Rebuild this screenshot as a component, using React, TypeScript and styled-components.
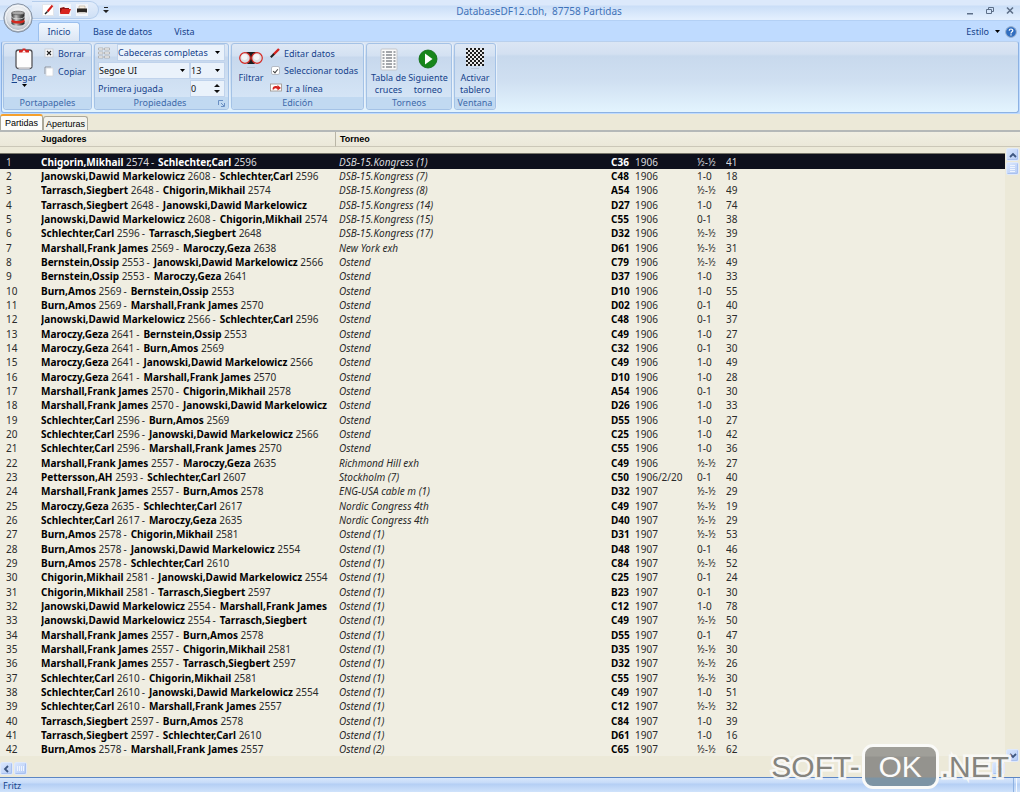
import React from "react";
import styled, { createGlobalStyle } from "styled-components";

const GlobalStyle = createGlobalStyle`
  *, *::before, *::after { box-sizing: border-box; }
  body { margin: 0; background: #ece9d8; font-family: "Noto Sans", "Open Sans", sans-serif; font-size: 10px; }
  button, input, select { font: inherit; color: inherit; margin: 0; padding: 0; border: 0; background: none; }
  svg { display: block; flex: none; }
`;

/* ---------- Window frame ---------- */

const Window = styled.div`
  display: flex;
  flex-direction: column;
  min-height: 100vh;
  position: relative;
`;

const TopChrome = styled.header`
  position: relative;
`;

const TitleBar = styled.div`
  display: flex;
  align-items: center;
  height: 21px;
  padding: 0 5px 0 32px;
  background: linear-gradient(#dce9fb 0, #dce9fb 5px, #cadef7 6px, #e3effe 19px);
  border-bottom: 1px solid #b3d0f5;
`;

const QuickAccess = styled.div`
  display: flex;
  align-items: center;
  gap: 5px;
  height: 18px;
  padding: 0 10px 0 10px;
  border: 1px solid #b5cdec;
  border-left: 0;
  border-radius: 0 9px 9px 0;
  background: linear-gradient(#e3edfb, #cfe0f5);
`;

const PlainButton = styled.button`
  display: flex;
  align-items: center;
  justify-content: center;
`;

const Overflow = styled(PlainButton)`
  margin-left: 4px;
`;

const Title = styled.h1`
  flex: 1;
  margin: 0;
  padding: 2px 0 0 4px;
  text-align: center;
  font-size: 10px;
  line-height: 14px;
  font-weight: 400;
  color: #3f72b8;
`;

const WindowButtons = styled.div`
  display: flex;
  gap: 10px;
`;

const AppButton = styled.button`
  position: absolute;
  left: 3px;
  top: 3px;
`;

const TabBar = styled.nav`
  display: flex;
  align-items: stretch;
  height: 20px;
  padding: 1px 3px 0 38px;
  background: #bfdbff;
`;

const RibbonTab = styled.button<{ $active?: boolean }>`
  min-width: ${(p) => (p.$active ? "42px" : "0")};
  margin-right: ${(p) => (p.$active ? "12px" : "20px")};
  font-size: 9px;
  line-height: 14px;
  color: #15428b;
  border: 1px solid ${(p) => (p.$active ? "#9cc0ee" : "transparent")};
  border-bottom: 0;
  border-radius: 3px 3px 0 0;
  background: ${(p) => (p.$active ? "linear-gradient(#f2f8ff, #dbe6f4)" : "none")};
`;

const StyleMenu = styled.div`
  display: flex;
  align-items: center;
  gap: 5px;
  margin-left: auto;
  font-size: 9px;
  color: #15428b;
`;

const StyleButton = styled(PlainButton)`
  gap: 6px;
`;

/* ---------- Ribbon ---------- */

const RibbonArea = styled.div`
  padding: 0 1px 1px;
  background: #bfdbff;
`;

const Ribbon = styled.section`
  display: flex;
  gap: 2px;
  height: 72px;
  padding: 1px 2px 2px 1px;
  border: 1px solid #8db2e3;
  border-top-color: #b9d0ed;
  border-radius: 3px;
  background: linear-gradient(#dbe6f4 0, #d3e0f1 12px, #c8d9ed 14px, #cfdff1 38px, #e3f4fe 70px);
`;

const Group = styled.fieldset<{ $width: number }>`
  display: flex;
  flex-direction: column;
  width: ${(p) => p.$width}px;
  min-width: 0;
  margin: 0;
  padding: 0;
  border: 1px solid #a4c2e6;
  border-radius: 3px;
  background: linear-gradient(#dee8f5 0, #d3e1f2 12px, #c7d8ed 13px, #d5e5f6 55px);
  overflow: hidden;
  box-shadow: 1px 0 0 #e8f1fb;
`;

const GroupBody = styled.div<{ $gap?: number }>`
  display: flex;
  flex: 1;
  min-height: 0;
  gap: ${(p) => p.$gap ?? 0}px;
  padding: 0 3px;
`;

const GroupLabel = styled.div`
  display: flex;
  align-items: center;
  justify-content: center;
  flex: none;
  height: 12px;
  font-size: 9px;
  line-height: 12px;
  color: #3e6aaa;
  background: #c1d9f1;
`;

const LauncherSpacer = styled.span`
  flex: 1;
`;

const LauncherSide = styled(LauncherSpacer)`
  display: flex;
  justify-content: flex-end;
  padding-right: 3px;
`;

const BigButton = styled.button<{ $width: number }>`
  display: flex;
  flex-direction: column;
  align-items: center;
  justify-content: flex-start;
  width: ${(p) => p.$width}px;
  flex: none;
  padding-top: 2px;
  font-size: 9px;
  line-height: 12px;
  color: #15428b;
  white-space: nowrap;
`;

const BigIcon = styled.span`
  display: flex;
  align-items: center;
  justify-content: center;
  height: 26px;
`;

const ButtonText = styled.span`
  display: block;
`;

const Stack = styled.div`
  display: flex;
  flex-direction: column;
`;

const SmallButton = styled.button`
  display: flex;
  align-items: center;
  gap: 4px;
  height: 18px;
  font-size: 9px;
  color: #15428b;
  white-space: nowrap;
`;

const CheckLabel = styled.label`
  display: flex;
  align-items: center;
  gap: 4px;
  height: 17px;
  padding-left: 1px;
  font-size: 9px;
  color: #15428b;
  white-space: nowrap;
`;

const CheckBox = styled.input`
  appearance: none;
  width: 9px;
  height: 9px;
  border: 1px solid #b6bcc6;
  border-radius: 2px;
  background: #fff;
  display: grid;
  place-items: center;

  &:checked::after {
    content: "";
    width: 3px;
    height: 5px;
    border: solid #444;
    border-width: 0 1px 1px 0;
    rotate: 40deg;
  }
`;

const FieldRow = styled.div`
  display: flex;
  align-items: center;
  height: 18px;
`;

const Combo = styled.span<{ $width: number }>`
  display: flex;
  align-items: center;
  width: ${(p) => p.$width}px;
  height: 17px;
  padding-right: 4px;
  border: 1px solid #c0d3ec;
  background: #eaf2fb;
`;

const ComboSelect = styled.select<{ $dark?: boolean }>`
  appearance: none;
  flex: 1;
  min-width: 0;
  height: 15px;
  font-size: 9px;
  color: ${(p) => (p.$dark ? "#111" : "#15428b")};
`;

const FieldLabel = styled.label`
  width: 92px;
  font-size: 9px;
  color: #15428b;
`;

const NumberInput = styled.input`
  flex: 1;
  width: 0;
  font-size: 9px;
  color: #111;
`;

/* ---------- Document tabs ---------- */

const DocTabs = styled.nav`
  display: flex;
  align-items: flex-end;
  height: 16px;
`;

const DocTab = styled.button<{ $active?: boolean }>`
  height: ${(p) => (p.$active ? 16 : 14)}px;
  padding: 0 ${(p) => (p.$active ? 4 : 2)}px;
  font-family: "Liberation Sans", Arial, sans-serif;
  font-size: 9px;
  line-height: 12px;
  color: #000;
  border: 1px solid #aca899;
  border-top: ${(p) => (p.$active ? "2px solid #f5a02c" : "1px solid #aca899")};
  border-bottom: 0;
  border-radius: 3px 3px 0 0;
  background: ${(p) => (p.$active ? "#fdfdfb" : "#f4f3ec")};
`;

/* ---------- Game list ---------- */

const ListPane = styled.main`
  display: flex;
  flex: 1;
  border-top: 2px solid #b4b8b8;
`;

const HeaderStrip = styled.div`
  height: 15px;
  border-bottom: 1px solid #cbc7b8;
  background: linear-gradient(#f0eee2, #ebe8d9);
`;

const Games = styled.table`
  flex: 1;
  align-self: flex-start;
  width: 0;
  table-layout: fixed;
  border-collapse: separate;
  border-spacing: 0;
  color: #2a2a2a;
  line-height: 14px;
  white-space: nowrap;

  th {
    height: 15px;
    padding: 0 0 0 5px;
    text-align: left;
    font-family: "Liberation Sans", Arial, sans-serif;
    font-size: 9px;
    line-height: 14px;
    color: #000;
    border-bottom: 1px solid #cbc7b8;
    background: linear-gradient(#f0eee2, #ebe8d9);
  }
  th:nth-child(2) { padding-left: 0; border-right: 1px solid #b9b5a6; }
  th:nth-child(3) { padding-left: 4px; }
`;

const HeaderGap = styled.tbody`
  td { height: 7px; padding: 0; border-bottom: 1px solid #77766a; }
`;

const GameRows = styled.tbody`
  background: #f0eee2;
`;

const GameRow = styled.tr<{ $selected?: boolean }>`
  color: ${(p) => (p.$selected ? "#d9d9dd" : "inherit")};
  background: ${(p) => (p.$selected ? "#0e101c" : "transparent")};

  td { height: 14px; padding: 0; overflow: hidden; }
  &:nth-child(3n + 1) td { height: 15px; }
  td:first-child { padding-left: 6px; }
  td:nth-child(3) { padding-left: 3px; font-style: italic; }
  td:nth-child(4) { font-weight: 700; }
  b, td:nth-child(4) { color: ${(p) => (p.$selected ? "#fff" : "#000")}; }
`;

const Dash = styled.span`
  margin: 0 4px 0 2px;
`;

const Side = styled.aside`
  display: flex;
  flex-direction: column;
  width: 15px;
`;

const ScrollV = styled.div`
  display: flex;
  flex: 1;
  flex-direction: column;
  gap: 1px;
  padding: 1px 0 0 1px;

  button:last-child { margin-top: auto; }
`;

const ScrollH = styled.div`
  display: flex;
  gap: 1px;
  height: 15px;
  padding-right: 15px;

  button:last-child { margin-left: auto; }
`;

const ScrollButton = styled(PlainButton)`
  width: 13px;
  height: 13px;
  border: 1px solid #dfe9fb;
  border-radius: 2px;
  background: linear-gradient(135deg, #d9e6fd, #b5cbf5);
  box-shadow: inset -1px -1px 0 #a9c1ef;
`;

const StatusBar = styled.footer`
  display: flex;
  justify-content: space-between;
  height: 15px;
  padding: 0 3px;
  font-size: 9px;
  line-height: 15px;
  color: #15428b;
  border-top: 1px solid #5c86c4;
  background: linear-gradient(#d8e7fb 0, #c5daf8 5px, #b4cef4 6px, #cfe2fb 14px);
`;

const StatusGrip = styled.span`
  width: 4px;
  border-left: 1px solid #8fb2e2;
  border-right: 1px solid #f3f8ff;
`;

/* ---------- Watermark ---------- */

const Watermark = styled.div`
  position: absolute;
  right: 11px;
  bottom: 3px;
  display: flex;
  align-items: center;
  gap: 2px;
  font-family: "Liberation Sans", Arial, sans-serif;
  font-size: 30px;
  line-height: 40px;
  color: #85847e;
  -webkit-text-stroke: 5px rgba(250, 250, 248, 0.9);
  paint-order: stroke fill;
  pointer-events: none;
`;

const WatermarkBadge = styled.span`
  width: 77px;
  height: 45px;
  text-align: center;
  color: #fbfbfa;
  -webkit-text-stroke: 0;
  border: 3px solid #fafaf8;
  border-radius: 11px;
  background: linear-gradient(#a09f99 0, #a09f99 9px, #94938e 10px, #94938e 30px, #7d94a4 31px);
`;

/* ---------- Icons ---------- */

const Arrow = ({ up }: { up?: boolean }) => (
  <svg width="5" height="3" viewBox="0 0 5 3">
    <path d={up ? "M0 3h5L2.500 0z" : "M0 0h5L2.500 3z"} fill="#000" />
  </svg>
);

const Spinner = () => (
  <svg width="6" height="11" viewBox="0 0 6 11">
    <path d="M0 4h6L3 1zM0 7h6L3 10z" fill="#111" />
  </svg>
);

const DatabaseOrb = () => (
  <svg width="30" height="30" viewBox="0 0 30 30">
    <defs>
      <radialGradient id="orb" cx="50%" cy="35%" r="65%">
        <stop offset="0" stopColor="#ffffff" />
        <stop offset="0.600" stopColor="#dde1e6" />
        <stop offset="1" stopColor="#a5adb8" />
      </radialGradient>
      <linearGradient id="disk">
        <stop offset="0" stopColor="#333" />
        <stop offset="0.350" stopColor="#c4c4c4" />
        <stop offset="0.700" stopColor="#555" />
        <stop offset="1" stopColor="#222" />
      </linearGradient>
    </defs>
    <circle cx="15" cy="15" r="14.200" fill="url(#orb)" stroke="#8693a5" />
    <circle cx="15" cy="15" r="12.500" fill="none" stroke="#f8fafc" />
    <path d="M8.500 18v2.500c1 3 12 3 13 0V18z" fill="url(#disk)" />
    <path d="M8.500 16.500v2c1 2.800 12 2.800 13 0v-2z" fill="#d3281e" />
    <path d="M8.500 13.500v2.500c1 2.800 12 2.800 13 0v-2.500z" fill="url(#disk)" />
    <path d="M8.500 14c1 2.500 12 2.500 13 0" fill="none" stroke="#eee" strokeWidth="0.700" />
    <path d="M8.500 10v3c1 2.600 12 2.600 13 0v-3z" fill="url(#disk)" />
    <ellipse cx="15" cy="10" rx="6.500" ry="1.800" fill="#a8a8a8" stroke="#555" strokeWidth="0.700" />
  </svg>
);

const NewDocIcon = () => (
  <svg width="12" height="12" viewBox="0 0 12 12">
    <path d="M.5.500h11v11H.5z" fill="#fff" stroke="#e2e5ea" />
    <path d="M5.500 7.500L10.500 1.500" stroke="#d0201c" strokeWidth="2" />
    <path d="M3 10l2.500-2.500" stroke="#222" strokeWidth="1.500" />
  </svg>
);

const FolderIcon = () => (
  <svg width="12" height="12" viewBox="0 0 12 12">
    <path d="M0 0h12v12H0z" fill="#f3f5f9" />
    <path d="M1 9V4l4-1 1 1h4v2z" fill="#8e1512" />
    <path d="M1 10l2-5h9l-2 5z" fill="#d8251f" />
  </svg>
);

const PrinterIcon = () => (
  <svg width="12" height="12" viewBox="0 0 12 12">
    <path d="M0 0h12v12H0z" fill="#f3f5f9" />
    <path d="M3 2h6v3H3z" fill="#f6efe4" stroke="#b7a58d" strokeWidth="0.600" />
    <path d="M1 4.500h10V8.500H1z" fill="#2b2724" />
    <path d="M2.500 8h7v1.500h-7z" fill="#d2cec8" />
  </svg>
);

const PasteIcon = () => (
  <svg width="20" height="24" viewBox="0 0 20 24">
    <rect x="2" y="3" width="16" height="18.500" rx="2.500" fill="#fdfdfd" stroke="#55555a" strokeWidth="1.300" />
    <path d="M4.500 21.500h11l2-2" stroke="#c5c5ca" fill="none" />
    <path d="M5 5.500V3h3.500V1.500h3V3H15v2.500z" fill="#d42420" />
    <path d="M8 5.500L10 3l2 2.500z" fill="#fff" />
  </svg>
);

const DeleteIcon = () => (
  <svg width="10" height="10" viewBox="0 0 10 10">
    <rect x="1" y="1" width="8" height="8" fill="#f9f9fa" stroke="#c4c8cf" strokeWidth="0.800" />
    <path d="M3 3l4 4M7 3L3 7" stroke="#222" strokeWidth="1.100" />
  </svg>
);

const CopyIcon = () => (
  <svg width="10" height="11" viewBox="0 0 10 11">
    <path d="M1 8V1h6" fill="none" stroke="#93979e" />
    <path d="M2 2h7v8H2z" fill="#fff" stroke="#d4d7dc" strokeWidth="0.800" />
  </svg>
);

const HeadersIcon = () => (
  <svg width="12" height="12" viewBox="0 0 12 12" fill="#fbfbfb" stroke="#a9a9a9" strokeWidth="0.800">
    {[1, 5, 9].map((y) => (
      <path key={y} d={`M.5 ${y}h4.500v2H.5zM6.500 ${y}h5v2h-5z`} />
    ))}
  </svg>
);

const FilterIcon = () => (
  <svg width="24" height="20" viewBox="0 0 24 20">
    <path d="M7 3h10l-3 5v4l2 3H8l2-3V8z" fill="#1d1d1f" />
    <circle cx="6" cy="9" r="5.300" fill="#dcdfe4" stroke="#d52a25" strokeWidth="1.200" />
    <circle cx="18" cy="9" r="5.300" fill="#dcdfe4" stroke="#d52a25" strokeWidth="1.200" />
    <circle cx="5.500" cy="8" r="3" fill="#f4f5f7" />
    <circle cx="17.500" cy="8" r="3" fill="#f4f5f7" />
    <path d="M8 18.500h8" stroke="#b9c5d6" />
  </svg>
);

const EditIcon = () => (
  <svg width="10" height="10" viewBox="0 0 10 10">
    <path d="M3.500 6.500l5.500-5.500" stroke="#d3231f" strokeWidth="2.400" />
    <path d="M.8 9.200l3.200-3.200" stroke="#1f1f1f" strokeWidth="2" />
  </svg>
);

const GoToIcon = () => (
  <svg width="12" height="10" viewBox="0 0 12 10">
    <rect x=".5" y="1" width="11" height="7" fill="#fff" stroke="#9a8f88" strokeWidth="0.800" />
    <path d="M2.500 6.500c0-3.500 3-4 5-3V2l3.500 3L7.500 7.500V6C5.500 5 4.500 5 4 6.500z" fill="#d5251f" />
  </svg>
);

const CrossTableIcon = () => (
  <svg width="18" height="23" viewBox="0 0 18 23">
    <rect x="1" y="1" width="16" height="21" rx="1" fill="#fbfbfb" stroke="#c2c5ca" />
    {[3, 6, 9, 12, 15, 18].map((y) => (
      <path key={y} d={`M2.500 ${y}h2v2h-2zM6 ${y}h6v2H6zM13.500 ${y}h2v2h-2z`} fill="#a3a6aa" />
    ))}
  </svg>
);

const NextIcon = () => (
  <svg width="20" height="20" viewBox="0 0 20 20">
    <circle cx="10" cy="10" r="9" fill="#17861b" stroke="#0d6a11" strokeWidth="0.800" />
    <path d="M7 4.500v11l7.500-5.500z" fill="#fff" />
  </svg>
);

const BoardIcon = () => (
  <svg width="18" height="22" viewBox="0 0 18 22">
    <defs>
      <pattern id="board" width="4" height="4" patternUnits="userSpaceOnUse">
        <path d="M0 0h4v4H0z" fill="#e9e9e9" />
        <path d="M0 0h2v2H0zM2 2h2v2H2z" fill="#1c1c1c" />
      </pattern>
    </defs>
    <path d="M0 0h18v18H0z" fill="url(#board)" />
    <path d="M5 20.500h8" stroke="#b9c5d6" />
  </svg>
);

const LauncherIcon = () => (
  <svg width="7" height="7" viewBox="0 0 7 7" fill="none" stroke="#6a8fc3">
    <path d="M.5 5V.5H5M3 3l3 3M6.500 3v3.500H3" />
  </svg>
);

const HelpIcon = () => (
  <svg width="12" height="12" viewBox="0 0 12 12">
    <circle cx="6" cy="6" r="5.400" fill="#2f6dc0" stroke="#9bb0cb" />
    <path d="M4.200 4.800c0-2.400 3.600-2.300 3.600-.2C7.800 5.900 6 5.800 6 7.400M6 8.300v1.300" stroke="#fff" strokeWidth="1.200" fill="none" />
  </svg>
);

const Chevron = ({ d }: { d: string }) => (
  <svg width="8" height="8" viewBox="0 0 8 8">
    <path d={d} fill="none" stroke="#3d5680" strokeWidth="1.800" />
  </svg>
);

const ThumbGrip = ({ vertical }: { vertical?: boolean }) => (
  <svg width="7" height="7" viewBox="0 0 7 7" stroke="#eef4fe">
    <path d={vertical ? "M.5 1v5M2.500 1v5M4.500 1v5M6.500 1v5" : "M1 .5h5M1 2.500h5M1 4.500h5M1 6.500h5"} />
  </svg>
);

/* ---------- Data ---------- */

const GAMES = `Chigorin,Mikhail 2574|Schlechter,Carl 2596|DSB-15.Kongress (1)|C36|1906|½-½|41
Janowski,Dawid Markelowicz 2608|Schlechter,Carl 2596|DSB-15.Kongress (7)|C48|1906|1-0|18
Tarrasch,Siegbert 2648|Chigorin,Mikhail 2574|DSB-15.Kongress (8)|A54|1906|½-½|49
Tarrasch,Siegbert 2648|Janowski,Dawid Markelowicz|DSB-15.Kongress (14)|D27|1906|1-0|74
Janowski,Dawid Markelowicz 2608|Chigorin,Mikhail 2574|DSB-15.Kongress (15)|C55|1906|0-1|38
Schlechter,Carl 2596|Tarrasch,Siegbert 2648|DSB-15.Kongress (17)|D32|1906|½-½|39
Marshall,Frank James 2569|Maroczy,Geza 2638|New York exh|D61|1906|½-½|31
Bernstein,Ossip 2553|Janowski,Dawid Markelowicz 2566|Ostend|C79|1906|½-½|49
Bernstein,Ossip 2553|Maroczy,Geza 2641|Ostend|D37|1906|1-0|33
Burn,Amos 2569|Bernstein,Ossip 2553|Ostend|D10|1906|1-0|55
Burn,Amos 2569|Marshall,Frank James 2570|Ostend|D02|1906|0-1|40
Janowski,Dawid Markelowicz 2566|Schlechter,Carl 2596|Ostend|C48|1906|0-1|37
Maroczy,Geza 2641|Bernstein,Ossip 2553|Ostend|C49|1906|1-0|27
Maroczy,Geza 2641|Burn,Amos 2569|Ostend|C32|1906|0-1|30
Maroczy,Geza 2641|Janowski,Dawid Markelowicz 2566|Ostend|C49|1906|1-0|49
Maroczy,Geza 2641|Marshall,Frank James 2570|Ostend|D10|1906|1-0|28
Marshall,Frank James 2570|Chigorin,Mikhail 2578|Ostend|A54|1906|0-1|30
Marshall,Frank James 2570|Janowski,Dawid Markelowicz|Ostend|D26|1906|1-0|33
Schlechter,Carl 2596|Burn,Amos 2569|Ostend|D55|1906|1-0|27
Schlechter,Carl 2596|Janowski,Dawid Markelowicz 2566|Ostend|C25|1906|1-0|42
Schlechter,Carl 2596|Marshall,Frank James 2570|Ostend|C55|1906|1-0|36
Marshall,Frank James 2557|Maroczy,Geza 2635|Richmond Hill exh|C49|1906|½-½|27
Pettersson,AH 2593|Schlechter,Carl 2607|Stockholm (7)|C50|1906/2/20|0-1|40
Marshall,Frank James 2557|Burn,Amos 2578|ENG-USA cable m (1)|D32|1907|½-½|29
Maroczy,Geza 2635|Schlechter,Carl 2617|Nordic Congress 4th|C49|1907|½-½|19
Schlechter,Carl 2617|Maroczy,Geza 2635|Nordic Congress 4th|D40|1907|½-½|29
Burn,Amos 2578|Chigorin,Mikhail 2581|Ostend (1)|D31|1907|½-½|53
Burn,Amos 2578|Janowski,Dawid Markelowicz 2554|Ostend (1)|D48|1907|0-1|46
Burn,Amos 2578|Schlechter,Carl 2610|Ostend (1)|C84|1907|½-½|52
Chigorin,Mikhail 2581|Janowski,Dawid Markelowicz 2554|Ostend (1)|C25|1907|0-1|24
Chigorin,Mikhail 2581|Tarrasch,Siegbert 2597|Ostend (1)|B23|1907|0-1|30
Janowski,Dawid Markelowicz 2554|Marshall,Frank James|Ostend (1)|C12|1907|1-0|78
Janowski,Dawid Markelowicz 2554|Tarrasch,Siegbert|Ostend (1)|C49|1907|½-½|50
Marshall,Frank James 2557|Burn,Amos 2578|Ostend (1)|D55|1907|0-1|47
Marshall,Frank James 2557|Chigorin,Mikhail 2581|Ostend (1)|D35|1907|½-½|30
Marshall,Frank James 2557|Tarrasch,Siegbert 2597|Ostend (1)|D32|1907|½-½|26
Schlechter,Carl 2610|Chigorin,Mikhail 2581|Ostend (1)|C55|1907|½-½|30
Schlechter,Carl 2610|Janowski,Dawid Markelowicz 2554|Ostend (1)|C49|1907|1-0|51
Schlechter,Carl 2610|Marshall,Frank James 2557|Ostend (1)|C12|1907|½-½|32
Tarrasch,Siegbert 2597|Burn,Amos 2578|Ostend (1)|C84|1907|1-0|39
Tarrasch,Siegbert 2597|Schlechter,Carl 2610|Ostend (1)|D61|1907|1-0|16
Burn,Amos 2578|Marshall,Frank James 2557|Ostend (2)|C65|1907|½-½|62`
  .split("\n")
  .map((line) => line.split("|"));

const Player = ({ text }: { text: string }) => {
  const rated = /^(.*) (\d{4})$/.exec(text);
  return rated ? (
    <>
      <b>{rated[1]}</b> {rated[2]}
    </>
  ) : (
    <b>{text}</b>
  );
};

/* ---------- App ---------- */

export default function App() {
  return (
    <>
      <GlobalStyle />
      <Window>
        <TopChrome>
          <TitleBar>
            <QuickAccess>
              <PlainButton aria-label="Nuevo"><NewDocIcon /></PlainButton>
              <PlainButton aria-label="Abrir"><FolderIcon /></PlainButton>
              <PlainButton aria-label="Imprimir"><PrinterIcon /></PlainButton>
            </QuickAccess>
            <Overflow aria-label="Personalizar">
              <svg width="6" height="7" viewBox="0 0 6 7">
                <path d="M1 0h4v1H1zM0 3h6L3 6z" fill="#222" />
              </svg>
            </Overflow>
            <Title>DatabaseDF12.cbh,&nbsp; 87758 Partidas</Title>
            <WindowButtons>
              <PlainButton aria-label="Minimizar">
                <svg width="10" height="9" viewBox="0 0 10 9"><path d="M2 7h6v1.500H2z" fill="#5d6f88" /></svg>
              </PlainButton>
              <PlainButton aria-label="Restaurar">
                <svg width="10" height="9" viewBox="0 0 10 9" fill="none" stroke="#5d6f88">
                  <path d="M3.500 3V1.500h5v4H7M1.500 3.500h5v4h-5z" />
                </svg>
              </PlainButton>
              <PlainButton aria-label="Cerrar">
                <svg width="10" height="9" viewBox="0 0 10 9"><path d="M2 1.500l6 6M8 1.500l-6 6" stroke="#5d6f88" strokeWidth="1.600" /></svg>
              </PlainButton>
            </WindowButtons>
          </TitleBar>
          <TabBar>
            <RibbonTab $active>Inicio</RibbonTab>
            <RibbonTab>Base de datos</RibbonTab>
            <RibbonTab>Vista</RibbonTab>
            <StyleMenu>
              <StyleButton>Estilo <Arrow /></StyleButton>
              <PlainButton aria-label="Ayuda"><HelpIcon /></PlainButton>
            </StyleMenu>
          </TabBar>
          <AppButton aria-label="Menú de la aplicación"><DatabaseOrb /></AppButton>
        </TopChrome>

        <RibbonArea>
          <Ribbon>
            <Group $width={89} aria-label="Portapapeles">
              <GroupBody $gap={3}>
                <BigButton $width={34}>
                  <BigIcon><PasteIcon /></BigIcon>
                  <ButtonText><u>P</u>egar</ButtonText>
                  <Arrow />
                </BigButton>
                <Stack>
                  <SmallButton><DeleteIcon />Borrar</SmallButton>
                  <SmallButton><CopyIcon />Copiar</SmallButton>
                </Stack>
              </GroupBody>
              <GroupLabel>Portapapeles</GroupLabel>
            </Group>

            <Group $width={135} aria-label="Propiedades">
              <GroupBody>
                <Stack>
                  <FieldRow>
                    <LauncherSpacer><HeadersIcon /></LauncherSpacer>
                    <Combo $width={108}>
                      <ComboSelect aria-label="Cabeceras"><option>Cabeceras completas</option></ComboSelect>
                      <Arrow />
                    </Combo>
                  </FieldRow>
                  <FieldRow>
                    <Combo $width={92}>
                      <ComboSelect $dark aria-label="Fuente"><option>Segoe UI</option></ComboSelect>
                      <Arrow />
                    </Combo>
                    <Combo $width={35}>
                      <ComboSelect $dark aria-label="Tamaño"><option>13</option></ComboSelect>
                      <Arrow />
                    </Combo>
                  </FieldRow>
                  <FieldRow>
                    <FieldLabel htmlFor="first-move">Primera jugada</FieldLabel>
                    <Combo $width={35}>
                      <NumberInput id="first-move" defaultValue="0" />
                      <Spinner />
                    </Combo>
                  </FieldRow>
                </Stack>
              </GroupBody>
              <GroupLabel>
                <LauncherSpacer />
                Propiedades
                <LauncherSide><LauncherIcon /></LauncherSide>
              </GroupLabel>
            </Group>

            <Group $width={133} aria-label="Edición">
              <GroupBody $gap={3}>
                <BigButton $width={32}>
                  <BigIcon><FilterIcon /></BigIcon>
                  <ButtonText>Filtrar</ButtonText>
                </BigButton>
                <Stack>
                  <SmallButton><EditIcon />Editar datos</SmallButton>
                  <CheckLabel><CheckBox type="checkbox" defaultChecked />Seleccionar todas</CheckLabel>
                  <SmallButton><GoToIcon />Ir a línea</SmallButton>
                </Stack>
              </GroupBody>
              <GroupLabel>Edición</GroupLabel>
            </Group>

            <Group $width={86} aria-label="Torneos">
              <GroupBody>
                <BigButton $width={37}>
                  <BigIcon><CrossTableIcon /></BigIcon>
                  <ButtonText>Tabla de<br />cruces</ButtonText>
                </BigButton>
                <BigButton $width={42}>
                  <BigIcon><NextIcon /></BigIcon>
                  <ButtonText>Siguiente<br />torneo</ButtonText>
                </BigButton>
              </GroupBody>
              <GroupLabel>Torneos</GroupLabel>
            </Group>

            <Group $width={42} aria-label="Ventana">
              <GroupBody>
                <BigButton $width={34}>
                  <BigIcon><BoardIcon /></BigIcon>
                  <ButtonText>Activar<br />tablero</ButtonText>
                </BigButton>
              </GroupBody>
              <GroupLabel>Ventana</GroupLabel>
            </Group>
          </Ribbon>
        </RibbonArea>

        <DocTabs>
          <DocTab $active>Partidas</DocTab>
          <DocTab>Aperturas</DocTab>
        </DocTabs>

        <ListPane>
          <Games>
            <colgroup>
              <col width="41" />
              <col width="295" />
              <col width="275" />
              <col width="24" />
              <col width="62" />
              <col width="29" />
              <col />
            </colgroup>
            <thead>
              <tr>
                <th />
                <th scope="col">Jugadores</th>
                <th scope="col" colSpan={5}>Torneo</th>
              </tr>
            </thead>
            <HeaderGap>
              <tr><td colSpan={7} /></tr>
            </HeaderGap>
            <GameRows>
              {GAMES.map(([white, black, ...rest], i) => (
                <GameRow key={i} $selected={i === 0}>
                  <td>{i + 1}</td>
                  <td>
                    <Player text={white} />
                    <Dash>-</Dash>
                    <Player text={black} />
                  </td>
                  {rest.map((cell, j) => (
                    <td key={j}>{cell}</td>
                  ))}
                </GameRow>
              ))}
            </GameRows>
          </Games>
          <Side>
            <HeaderStrip />
            <ScrollV>
              <ScrollButton aria-label="Subir"><Chevron d="M1 6l3-3 3 3" /></ScrollButton>
              <ScrollButton aria-label="Posición vertical"><ThumbGrip /></ScrollButton>
              <ScrollButton aria-label="Bajar"><Chevron d="M1 2l3 3 3-3" /></ScrollButton>
            </ScrollV>
          </Side>
        </ListPane>
        <ScrollH>
          <ScrollButton aria-label="Izquierda"><Chevron d="M5 1L2 4l3 3" /></ScrollButton>
          <ScrollButton aria-label="Posición horizontal"><ThumbGrip vertical /></ScrollButton>
          <ScrollButton aria-label="Derecha"><Chevron d="M3 1l3 3-3 3" /></ScrollButton>
        </ScrollH>
        <StatusBar>
          <span>Fritz</span>
          <StatusGrip />
        </StatusBar>

        <Watermark>
          <span>SOFT-</span>
          <WatermarkBadge>OK</WatermarkBadge>
          <span>.NET</span>
        </Watermark>
      </Window>
    </>
  );
}
